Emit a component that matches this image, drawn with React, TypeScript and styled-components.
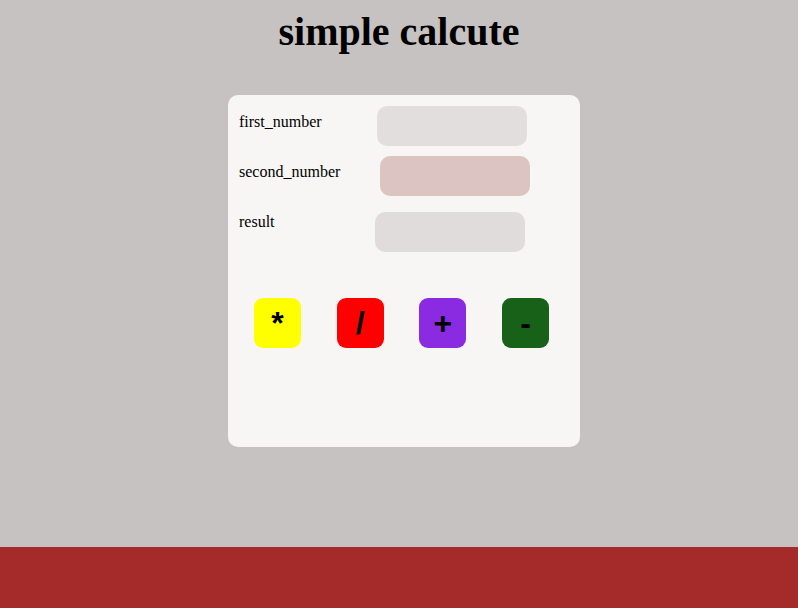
import { createGlobalStyle, styled } from 'styled-components';

const GlobalStyle = createGlobalStyle`
  html, body {
    margin: 0;
    padding: 0;
    background: #c6c2c1;
  }
  body {
    font-family: "Liberation Serif", "Times New Roman", serif;
  }
`;

const ops = [
  { sign: '*', color: '#ffff00' },
  { sign: '/', color: '#ff0000' },
  { sign: '+', color: '#8a2be2' },
  { sign: '-', color: '#176119' },
];

function App() {
  return (
    <Page>
      <GlobalStyle />
      <Main>
        <Title>simple calcute</Title>
        <Card>
          <Fields>
            <Row>
              <Label>first_number</Label>
              <Field $bg="#e3dede" $shift={0} />
            </Row>
            <Row>
              <Label>second_number</Label>
              <Field $bg="#dbc4c2" $shift={3} />
            </Row>
            <Row>
              <Label>result</Label>
              <Field $bg="#e0dcdc" $shift={-2} $drop={6} readOnly />
            </Row>
          </Fields>
          <Buttons>
            {ops.map((op) => (
              <OpButton key={op.sign} $bg={op.color}>
                {op.sign}
              </OpButton>
            ))}
          </Buttons>
        </Card>
      </Main>
      <Footer />
    </Page>
  );
}
export default App;

const Page = styled.div`
  min-height: 100vh;
  display: flex;
  flex-direction: column;
`;

const Main = styled.main`
  flex: 1;
`;

const Title = styled.h1`
  margin: 9px 0 0;
  text-align: center;
  font-size: 40px;
  font-weight: bold;
  line-height: 46px;
`;

const Card = styled.div`
  width: 352px;
  height: 352px;
  box-sizing: border-box;
  margin: 40px 0 0 228px;
  padding: 11px 0 0 11px;
  background: #f8f6f5;
  border-radius: 10px;
`;

const Fields = styled.div`
  display: flex;
  flex-direction: column;
  gap: 10px;
`;

const Row = styled.div`
  display: grid;
  grid-template-columns: 138px 150px;
  align-items: start;
`;

const Label = styled.span`
  font-size: 16px;
  padding-top: 7px;
  color: #000;
`;

const Field = styled.input<{ $bg: string; $shift: number; $drop?: number }>`
  width: 150px;
  height: 40px;
  box-sizing: border-box;
  border: none;
  outline: none;
  border-radius: 10px;
  background: ${(p) => p.$bg};
  margin-left: ${(p) => p.$shift}px;
  margin-top: ${(p) => p.$drop ?? 0}px;
`;

const Buttons = styled.div`
  display: flex;
  gap: 35.7px;
  margin-top: 46px;
  padding-left: 15px;
`;

const OpButton = styled.button<{ $bg: string }>`
  width: 47px;
  height: 50px;
  border: none;
  border-radius: 9px;
  padding: 0;
  background: ${(p) => p.$bg};
  color: #000;
  font-family: "Liberation Sans", Arial, sans-serif;
  font-size: 32px;
  font-weight: bold;
  line-height: 50px;
`;

const Footer = styled.footer`
  height: 61px;
  background: #a52a2a;
`;
